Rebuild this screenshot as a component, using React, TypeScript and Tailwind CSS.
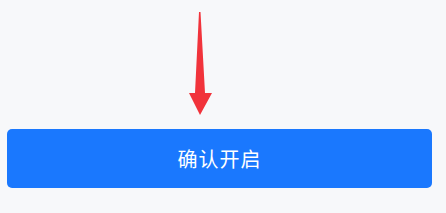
import React from 'react';

const DownArrow: React.FC = () => (
    <svg width="30" height="110" viewBox="0 0 30 110" className="block">
        {/* tapered shaft + head */}
        <polygon
            points="14,4 15.5,4 20,85 27,85 15,107 4,85 10,85"
            fill="#f1333b"
        />
    </svg>
);

const App: React.FC = () => {
    return (
        <div className="w-[446px] h-[213px] bg-[#f7f8fa] flex flex-col overflow-hidden">
            <div className="pt-[8px] h-[121px] pl-[185px]">
                <DownArrow />
            </div>
            <button
                className="ml-[7px] mt-[8px] w-[425px] h-[59px] rounded-[5px] bg-[#1a78fe] text-white text-[20px] tracking-[1px] flex items-center justify-center"
                style={{ fontFamily: '"Noto Sans CJK SC", sans-serif' }}
            >
                确认开启
            </button>
        </div>
    );
};

export default App;
